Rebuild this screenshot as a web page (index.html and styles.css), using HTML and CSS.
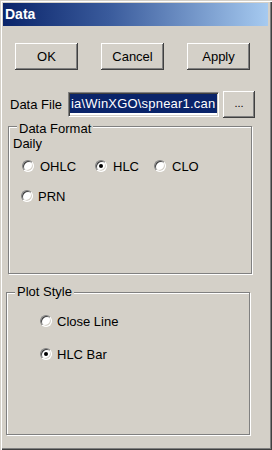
FILE: index.html
```html
<!DOCTYPE html>
<html>
<head>
<meta charset="utf-8">
<link rel="stylesheet" href="styles.css">
</head>
<body>
<div class="window">
  <div class="titlebar">Data</div>
  <div class="buttons">
    <div class="btn">OK</div>
    <div class="btn">Cancel</div>
    <div class="btn">Apply</div>
  </div>
  <div class="filerow">
    <span class="label">Data File</span>
    <div class="field"><span class="sel">ia\WinXGO\spnear1.can</span></div>
    <div class="btn browse">...</div>
  </div>
  <div class="group format">
    <span class="legend legend-format">Data Format</span>
    <div class="daily">Daily</div>
    <div class="radiogrid">
      <div class="radio"><span class="circle"></span><span>OHLC</span></div>
      <div class="radio"><span class="circle checked"></span><span>HLC</span></div>
      <div class="radio"><span class="circle"></span><span>CLO</span></div>
      <div class="radio prn"><span class="circle"></span><span>PRN</span></div>
    </div>
  </div>
  <div class="group plot">
    <span class="legend legend-plot">Plot Style</span>
    <div class="plotlist">
      <div class="radio"><span class="circle"></span><span>Close Line</span></div>
      <div class="radio"><span class="circle checked"></span><span>HLC Bar</span></div>
    </div>
  </div>
</div>
</body>
</html>
```
FILE: styles.css
```css
* { box-sizing: border-box; }
html, body { margin: 0; padding: 0; background: #d4d0c8; }
body {
  font-family: "Liberation Sans", Arial, sans-serif;
  font-size: 13px;
  line-height: 15px;
  color: #000;
}
.window {
  width: 272px;
  height: 450px;
  padding: 3px 4px 3px 3px;
  background: #d4d0c8;
  box-shadow: inset 1px 1px 0 #d4d0c8, inset 2px 2px 0 #fff, inset -1px -1px 0 #404040, inset -2px -2px 0 #808080;
  overflow: hidden;
}
.titlebar {
  height: 23px;
  line-height: 23px;
  padding-left: 2px;
  background: linear-gradient(to right, #0a246a 0%, #3a5b9c 40%, #a6caf0 100%);
  color: #fff;
  font-weight: bold;
  font-size: 14px;
}
.buttons {
  display: flex;
  gap: 23px;
  margin: 17px 0 0 12px;
}
.btn {
  width: 63px;
  height: 27px;
  display: flex;
  align-items: center;
  justify-content: center;
  background: #d4d0c8;
  box-shadow: inset -1px -1px 0 #404040, inset 1px 1px 0 #fff, inset -2px -2px 0 #808080;
}
.filerow {
  display: flex;
  align-items: center;
  margin: 21px 0 0 7px;
}
.label { width: 58px; }
.field {
  width: 151px;
  height: 25px;
  background: #fff;
  border: 1px solid;
  border-color: #808080 #fff #fff #808080;
  box-shadow: inset 1px 1px 0 #404040, inset -1px -1px 0 #d4d0c8;
  padding: 1px 1px 2px 1px;
  overflow: hidden;
}
.sel {
  display: block;
  height: 19px;
  line-height: 19px;
  background: #0a246a;
  color: #fff;
  white-space: nowrap;
  overflow: hidden;
  padding-left: 1px;
  letter-spacing: 0.2px;
}
.browse {
  width: 32px;
  margin-left: 4px;
  font-size: 11px;
  padding-bottom: 3px;
}
.group {
  position: relative;
  width: 244px;
  border: 1px solid #808080;
  box-shadow: 1px 1px 0 #fff, inset 1px 1px 0 #fff;
}
.legend {
  position: absolute;
  background: #d4d0c8;
  padding: 0 2px;
}
.format {
  height: 148px;
  margin: 8px 0 0 5px;
  padding: 9px 0 0 4px;
}
.legend-format { left: 8px; top: -6px; }
.daily { margin-top: 0; }
.radiogrid {
  display: grid;
  grid-template-columns: 73px 59px auto;
  row-gap: 14px;
  margin: 7px 0 0 9px;
}
.radio {
  display: flex;
  align-items: center;
  gap: 6px;
  height: 16px;
}
.prn { margin-left: -1px; gap: 5px; }
.circle {
  width: 12px;
  height: 12px;
  border-radius: 50%;
  background: #fff;
  border: 1px solid;
  border-color: #808080 #fff #fff #808080;
  box-shadow: inset 1px 1px 0 #404040, inset -1px -1px 0 #d4d0c8;
  display: flex;
  align-items: center;
  justify-content: center;
  flex: none;
}
.circle.checked::after {
  content: "";
  width: 4px;
  height: 4px;
  border-radius: 50%;
  background: #000;
}
.plot {
  height: 143px;
  margin: 18px 0 0 3px;
  padding: 20px 0 0 33px;
}
.legend-plot { left: 8px; top: -9px; }
.plotlist {
  display: flex;
  flex-direction: column;
  gap: 17px;
}
.plotlist .radio { gap: 5px; }
```
